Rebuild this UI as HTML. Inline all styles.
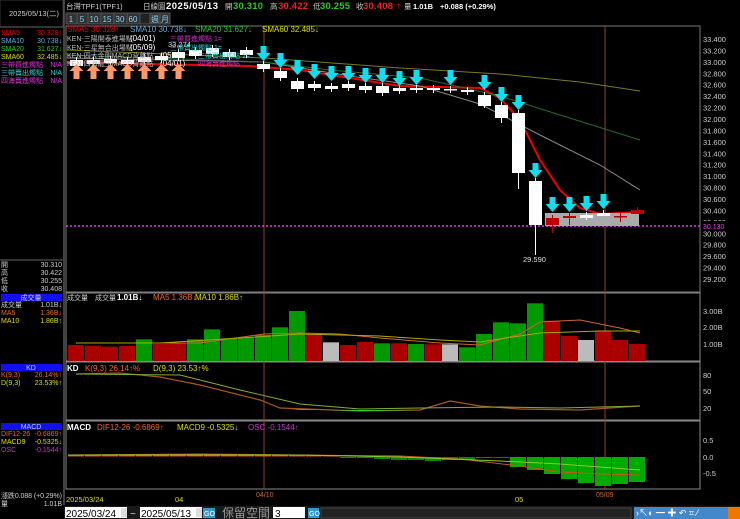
<!DOCTYPE html>
<html><head><meta charset="utf-8"><style>
body{margin:0;background:#000;width:740px;height:519px;overflow:hidden;font-family:"Liberation Sans","Noto Sans CJK TC",sans-serif}
svg{position:absolute;left:0;top:0}
text{font-family:"Liberation Sans","Noto Sans CJK TC",sans-serif}
.m{font-family:"Liberation Mono","Noto Sans CJK TC",monospace}
</style></head><body>
<svg id="s" width="740" height="519" viewBox="0 0 740 519" xmlns="http://www.w3.org/2000/svg">
<rect width="740" height="519" fill="#000"/>
<g font-size="7" class="m">
<rect x="0" y="0" width="63" height="27" fill="#000" stroke="#333"/>
<text x="9" y="16" fill="#ccc" font-size="7.5">2025/05/13(二)</text>
<line x1="0" y1="27" x2="63" y2="27" stroke="#666"/>
<text x="1" y="35" fill="#e00">SMA5</text><text x="62" y="35" fill="#e00" text-anchor="end">30.328↑</text>
<text x="1" y="43" fill="#6ad">SMA10</text><text x="62" y="43" fill="#6ad" text-anchor="end">30.738↓</text>
<text x="1" y="51" fill="#2c2">SMA20</text><text x="62" y="51" fill="#2c2" text-anchor="end">31.627↓</text>
<text x="1" y="59" fill="#dd0">SMA60</text><text x="62" y="59" fill="#dd0" text-anchor="end">32.485↓</text>
<text x="1" y="67" fill="#d3d">三帶買進燭點</text><text x="62" y="67" fill="#d3d" text-anchor="end">N/A</text>
<text x="1" y="75" fill="#3cc">三帶賣出燭點</text><text x="62" y="75" fill="#3cc" text-anchor="end">N/A</text>
<text x="1" y="83" fill="#d3d">四海賣進燭點</text><text x="62" y="83" fill="#d3d" text-anchor="end">N/A</text>
<line x1="0" y1="260" x2="63" y2="260" stroke="#666"/>
<text x="1" y="267" fill="#ccc">開</text><text x="62" y="267" fill="#ccc" text-anchor="end">30.310</text>
<text x="1" y="275" fill="#ccc">高</text><text x="62" y="275" fill="#ccc" text-anchor="end">30.422</text>
<text x="1" y="283" fill="#ccc">低</text><text x="62" y="283" fill="#ccc" text-anchor="end">30.255</text>
<text x="1" y="291" fill="#ccc">收</text><text x="62" y="291" fill="#ccc" text-anchor="end">30.408</text>
<rect x="1" y="294" width="61" height="7" fill="#11e"/><text x="31" y="300" fill="#ccc" text-anchor="middle">成交量</text>
<text x="1" y="307" fill="#ccc">成交量</text><text x="62" y="307" fill="#ccc" text-anchor="end">1.01B↓</text>
<text x="1" y="315" fill="#e62">MA5</text><text x="62" y="315" fill="#e62" text-anchor="end">1.36B↓</text>
<text x="1" y="323" fill="#dd0">MA10</text><text x="62" y="323" fill="#dd0" text-anchor="end">1.86B↑</text>
<rect x="1" y="364" width="61" height="7" fill="#11e"/><text x="31" y="370" fill="#ccc" text-anchor="middle">KD</text>
<text x="1" y="377" fill="#e62">K(9,3)</text><text x="62" y="377" fill="#e62" text-anchor="end">26.14%↑</text>
<text x="1" y="385" fill="#dd0">D(9,3)</text><text x="62" y="385" fill="#dd0" text-anchor="end">23.53%↑</text>
<rect x="1" y="423" width="61" height="7" fill="#11e"/><text x="31" y="429" fill="#ccc" text-anchor="middle">MACD</text>
<text x="1" y="436" fill="#e62">DIF12-26</text><text x="62" y="436" fill="#e62" text-anchor="end">-0.6869↑</text>
<text x="1" y="444" fill="#dd0">MACD9</text><text x="62" y="444" fill="#dd0" text-anchor="end">-0.5325↓</text>
<text x="1" y="452" fill="#c3c">OSC</text><text x="62" y="452" fill="#c3c" text-anchor="end">-0.1544↑</text>
<text x="1" y="498" fill="#ccc" textLength="61">漲跌0.088 (+0.29%)</text>
<text x="1" y="506" fill="#ccc">量</text><text x="62" y="506" fill="#ccc" text-anchor="end">1.01B</text>
</g>
<line x1="64" y1="0" x2="64" y2="505" stroke="#555" stroke-width="1.5"/>
<g font-size="9.5" font-weight="bold">
<text x="66" y="9" fill="#ccc" font-weight="normal" font-size="7.5">台灣TPF1(TPF1)</text>
<text x="143" y="9" fill="#ccc" font-weight="normal" font-size="7.5">日線圖</text>
<text x="166" y="9" fill="#fff" textLength="52">2025/05/13</text>
<text x="225" y="9" fill="#ccc" font-size="7.5" font-weight="normal">開</text><text x="233" y="9" fill="#2c2" textLength="30">30.310</text>
<text x="270" y="9" fill="#ccc" font-size="7.5" font-weight="normal">高</text><text x="278" y="9" fill="#e22" textLength="30">30.422</text>
<text x="313" y="9" fill="#ccc" font-size="7.5" font-weight="normal">低</text><text x="320" y="9" fill="#2c2" textLength="30">30.255</text>
<text x="356" y="9" fill="#ccc" font-size="7.5" font-weight="normal">收</text><text x="363" y="9" fill="#e22" textLength="30">30.408</text><text x="396" y="9" fill="#e22">↑</text>
<text x="392" y="9" fill="#ccc" font-size="7.5" font-weight="normal" dx="12">量</text><text x="413" y="9" fill="#fff" font-size="7.5">1.01B</text>
<text x="440" y="9" fill="#fff" font-size="7.5">+0.088 (+0.29%)</text>
</g>
<g font-size="8" fill="#8ce" text-anchor="middle">
<rect x="66" y="13" width="104" height="11" fill="#333"/>
<g stroke="#555" fill="none"><rect x="66" y="13" width="11" height="11"/><rect x="77" y="13" width="11" height="11"/><rect x="88" y="13" width="13" height="11"/><rect x="101" y="13" width="13" height="11"/><rect x="114" y="13" width="13" height="11"/><rect x="127" y="13" width="13" height="11"/><rect x="140" y="13" width="10" height="11" fill="#222"/><rect x="150" y="13" width="10" height="11"/><rect x="160" y="13" width="10" height="11"/></g>
<text x="71" y="22">1</text><text x="82" y="22">5</text><text x="94" y="22">10</text><text x="107" y="22">15</text><text x="120" y="22">30</text><text x="133" y="22">60</text><text x="155" y="22">週</text><text x="165" y="22">月</text>
</g>
<g id="chart"></g>
<g font-size="10">
<rect x="64" y="506" width="676" height="13" fill="#1a1a1a"/>
<rect x="65" y="507" width="62" height="11" fill="#fff"/><text x="66" y="517" fill="#000">2025/03/24</text><rect x="121" y="508" width="6" height="9" fill="#ddd"/>
<text x="130" y="517" fill="#ccc">~</text>
<rect x="140" y="507" width="62" height="11" fill="#fff"/><text x="141" y="517" fill="#000">2025/05/13</text><rect x="196" y="508" width="6" height="9" fill="#ddd"/>
<rect x="203" y="508" width="12" height="10" fill="#39c"/><text x="204" y="516" fill="#fff" font-size="7">GO</text>
<text x="222" y="517" fill="#999" font-size="12">保留空間</text>
<rect x="273" y="507" width="32" height="11" fill="#fff"/><text x="275" y="517" fill="#000">3</text>
<rect x="308" y="508" width="11" height="10" fill="#39c"/><text x="309" y="516" fill="#fff" font-size="7">GO</text>
<rect x="321" y="508" width="310" height="10" fill="#222" stroke="#444"/>
<rect x="634" y="507" width="106" height="12" fill="#48c"/>
<g fill="#fff" font-size="9"><text x="636" y="516">›↖◐ ━ ✚ ↶ ⌗ ⁄</text></g>
<rect x="728" y="507" width="12" height="12" fill="#e70"/>
</g>
</svg>
<script>
var g=document.getElementById('chart'),h='';
function L(a,b,c,d,s,w,e){h+='<line x1="'+a+'" y1="'+b+'" x2="'+c+'" y2="'+d+'" stroke="'+s+'" stroke-width="'+(w||1)+'" '+(e||'')+'/>';}
function R(x,y,w,hh,f,e){h+='<rect x="'+x+'" y="'+y+'" width="'+w+'" height="'+hh+'" fill="'+f+'" '+(e||'')+'/>';}
function T(x,y,t,f,s,e){h+='<text x="'+x+'" y="'+y+'" fill="'+f+'" font-size="'+(s||8)+'" '+(e||'')+'>'+t+'</text>';}
function P(pts,s,w){h+='<polyline fill="none" stroke="'+s+'" stroke-width="'+(w||1)+'" points="'+pts+'"/>';}
h+='<rect x="66" y="26" width="634" height="266" fill="none" stroke="#777"/>';
h+='<rect x="66" y="293" width="634" height="68" fill="none" stroke="#888"/>';
h+='<rect x="66" y="362" width="634" height="58" fill="none" stroke="#888"/>';
h+='<rect x="66" y="421" width="634" height="68" fill="none" stroke="#888"/>';
L(264,26,264,489,'#8a4a20');L(605,26,605,489,'#8a4a20');
var y=function(p){return 39+(33.4-p)*57.14;};
for(var p=33.4;p>29.1;p-=0.2){T(703,y(p)+3,p.toFixed(3),'#ccc',7.5);}
L(66,226,700,226,'#e3e','1.5','stroke-dasharray="2,2"');
R(701,221,39,9,'#000');T(703,229,'30.130','#e3e',7);
P('67,62 150,64 250,66 300,70 350,78 400,86 480,88 500,98 520,120 540,160 560,190 580,208 600,214 640,212','#e00',2);
P('67,58 264,62 350,76 420,86 480,104 540,135 600,165 640,190','#888',1);
P('67,55 264,62 330,70 420,78 500,96 560,115 640,140','#2a6a2a',1);
P('67,50 264,58 400,68 500,74 580,82 640,91','#7a7a20',1);
var C=[[60,66,'w'],[60,64,'w'],[59,63,'w'],[60,64,'w'],[57,62,'w'],[56,60,'w'],[52,58,'w'],[50,56,'w'],[48,54,'w'],[52,57,'w'],[50,55,'w'],
[64,69,'w'],[71,78,'w'],[81,89,'w'],[84,88,'w'],[86,89,'w'],[84,88,'w'],[86,90,'w'],[86,93,'w'],[88,91,'w'],[88,90,'w'],[88,90,'w'],[89,90,'w'],[90,92,'w'],
[95,106,'w',108],[105,118,'w',123],[113,173,'w',189],[181,225,'w',255],[218,225,'r',233],[216,218,'r',225],[215,218,'w',220],[213,216,'w',216],[216,217,'r',222],[210,214,'r',214]];
R(545,213,94,13,'#aaa');
for(var i=0;i<34;i++){var c=C[i],x=68+17*i,cx=x+8.5,col=c[2]=='r'?'#b00':'#fff';
L(cx,c[0]-3,cx,c[3]||c[1]+3,col);R(x+2,c[0],13,Math.max(c[1]-c[0],1.5),col);}
T(523,262,'29.590','#ddd',7.5);T(168,47,'33.274','#ddd',7.5);
T(67,32,'SMA5 30.328↑','#e00',8);T(130,32,'SMA10 30.738↓','#6ad',8);T(195,32,'SMA20 31.627↓','#2c2',8);T(262,32,'SMA60 32.485↓','#dd0',8);
T(67,41,'KEN-三陽開泰進場點','#bbb',7);T(130,41,'(04/01)','#fff',8);T(170,41,'三帶買進燭點 1=','#c3c',7);
T(67,50,'KEN-三星無合出場點','#bbb',7);T(130,50,'(05/09)','#fff',8);T(170,50,'三帶賣出燭點 1=','#3cc',7);
T(67,58,'KEN-四大金剛MACD背離點','#bbb',7);T(160,58,'(05/09)','#fff',8);T(198,58,'三帶賣出燭點 1=','#3cc',7);
T(67,66,'KEN-四海龍王MACD背離點','#bbb',7);T(160,66,'(04/01)','#fff',8);T(198,66,'四海賣進燭點','#c3c',7);
for(var i=0;i<7;i++){var cx=76.5+17*i;h+='<polygon fill="#f96" points="'+(cx-7)+',71 '+cx+',64 '+(cx+7)+',71 '+(cx+3)+',71 '+(cx+3)+',79 '+(cx-3)+',79 '+(cx-3)+',71"/>';}
var A={11:46,12:53,13:60,14:64,15:66,16:66,17:68,18:68,19:71,20:70,22:70,24:75,25:87,26:95,27:163,28:197,29:197,30:196,31:194};
for(var k in A){var cx=76.5+17*k,t=A[k];h+='<polygon fill="#1de" points="'+(cx-3)+','+t+' '+(cx+3)+','+t+' '+(cx+3)+','+(t+7)+' '+(cx+7)+','+(t+7)+' '+cx+','+(t+15)+' '+(cx-7)+','+(t+7)+' '+(cx-3)+','+(t+7)+'"/>';}
T(67,300,'成交量','#ccc',7);T(95,300,'成交量','#ccc',7);T(117,300,'1.01B↓','#fff',8,'font-weight="bold"');T(153,300,'MA5 1.36B↓','#e62',8);T(195,300,'MA10 1.86B↑','#dd0',8);
T(703,314,'3.00B','#ccc',7.5);T(703,330,'2.00B','#ccc',7.5);T(703,347,'1.00B','#ccc',7.5);
var V=[[195,'r'],[197,'r'],[200,'r'],[198,'r'],[178,'g'],[192,'r'],[190,'r'],[178,'g'],[148,'g'],[175,'g'],[172,'g'],[165,'g'],[142,'g'],[93,'g'],[163,'r'],[187,'s'],[195,'r'],[186,'r'],[190,'g'],[190,'r'],[192,'g'],[193,'r'],[193,'s'],[202,'g'],[162,'g'],[127,'g'],[130,'g'],[70,'g'],[122,'r'],[168,'r'],[180,'s'],[152,'r'],[180,'r'],[192,'r']];
for(var i=0;i<34;i++){var t=280+V[i][0]/3,f=V[i][1]=='r'?'#a00':V[i][1]=='g'?'#090':'#bbb';R(68+17*i,t,16,361-t,f);}
P('76,343 200,343 264,334 300,333 340,334 380,338 440,343 480,345 520,334 540,322 580,320 620,328 640,333','#c63',1);
P('76,343 160,343 240,338 300,334 380,336 440,340 480,342 540,333 600,331 640,331','#aa0',1);
T(67,371,'KD','#fff',8,'font-weight="bold"');T(85,371,'K(9,3) 26.14↑%','#e62',8);T(153,371,'D(9,3) 23.53↑%','#dd0',8);
T(703,378,'80','#ccc',7.5);T(703,394,'50','#ccc',7.5);T(703,411,'20','#ccc',7.5);
P('76,374 120,373 160,377 200,385 260,400 280,408 360,411 420,410 450,401 480,406 520,409 580,410 640,406','#a52',1.2);
P('76,374 180,375 240,390 300,404 360,409 420,408 500,407 560,408 640,406','#8a3',1);
h+='<path d="M290,409 L360,411 L420,410 L300,410Z" fill="#2d2"/>';
T(67,430,'MACD','#fff',8,'font-weight="bold"');T(97,430,'DIF12-26 -0.6869↑','#e62',8);T(177,430,'MACD9 -0.5325↓','#dd0',8);T(248,430,'OSC -0.1544↑','#c3c',8);
T(703,443,'0.5','#ccc',7.5);T(703,460,'0.0','#ccc',7.5);T(703,476,'-0.5','#ccc',7.5);
for(var i=0;i<16;i++){R(68+17*i,455,16,1.5,'#c52');}
for(var i=16;i<34;i++){var d=[1,1,2,3,3,4,3,3,1,1,5,8,12,17,21,24,22,20][i-16];var f=i<26?'#080':'#0a0';R(68+17*i,457,16,d+(i>25?5:0),f);}
P('68,455 200,454 300,455 400,456 460,459 520,466 560,472 600,474 640,475','#c52',1);
P('68,455 300,455 400,457 500,461 560,464 640,470','#8c3',1);
T(66,502,'2025/03/24','#dd0',7.5);T(175,502,'04','#dd0',7.5);T(256,497,'04/10','#c63',7);T(515,502,'05','#dd0',7.5);T(596,497,'05/09','#c63',7);
g.innerHTML=h;
</script>
</body></html>
